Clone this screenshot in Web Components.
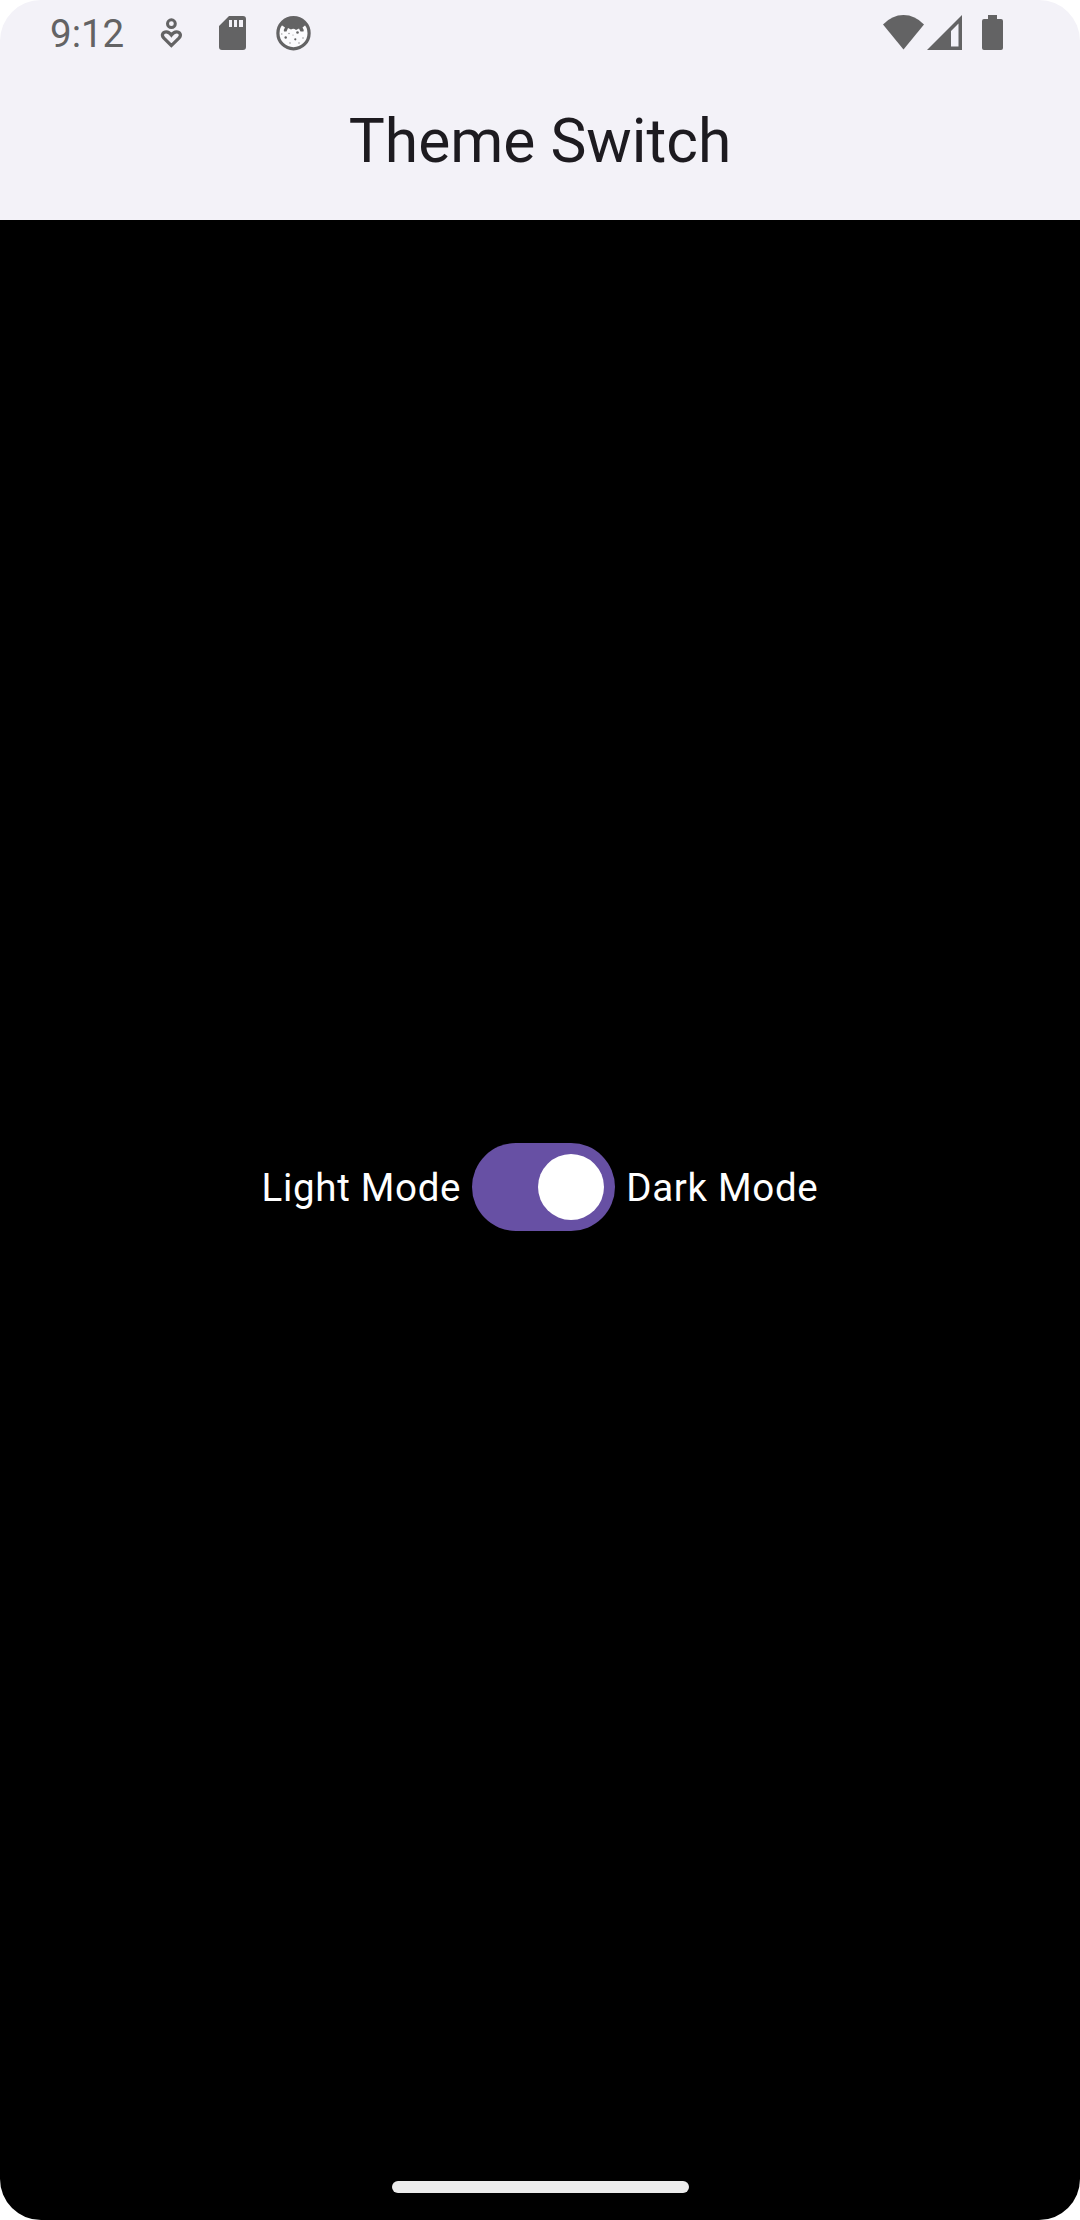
<!DOCTYPE html>
<html lang="en"><head><meta charset="utf-8"><title>Theme Switch</title>
<style>html,body{margin:0;background:#fff}</style></head>
<body>
<theme-screen>
<status-bar slot="top" time="9:12"></status-bar>
<app-bar slot="top">Theme Switch</app-bar>
<mode-label>Light Mode</mode-label><toggle-switch></toggle-switch><mode-label>Dark Mode</mode-label>
</theme-screen>
<script>
const define=(name,html)=>customElements.define(name,class extends HTMLElement{
 constructor(){super();this.attachShadow({mode:'open'}).innerHTML=html;}
 connectedCallback(){const t=this.shadowRoot.querySelector('.time');if(t)t.textContent=this.getAttribute('time');}
});
define('theme-screen',`<style>
:host{display:flex;flex-direction:column;width:1080px;height:2220px;box-sizing:border-box;font-family:Roboto,sans-serif}
header{height:220px;background:#f3f2f8;flex:none;border-radius:41px 41px 0 0}
main{flex:1;display:flex;align-items:center;justify-content:center;gap:11px;background:#000}
</style><header><slot name="top"></slot></header><main><slot></slot></main><home-indicator></home-indicator>`);
define('status-bar',`<style>
:host{display:flex;height:66px;box-sizing:border-box;padding:0 76px 0 50px;align-items:flex-start;color:#636364}
.time{font-size:38.5px;line-height:45px;width:105px;padding-top:11px}
svg{display:block;fill:currentColor;height:66px}
.right{margin-left:auto}
</style><span class="time"></span>
<svg width="160" viewBox="155 0 160 66">
<circle cx="171.4" cy="23.7" r="3.9" fill="none" stroke="currentColor" stroke-width="3"/>
<path d="M171.4 45.6L163.9 38.2C160.7 34.8 163.2 31.8 166.3 31.8C168.4 31.8 170 33 171.4 35C172.8 33 174.4 31.8 176.5 31.8C179.6 31.8 182.1 34.8 178.9 38.2Z" fill="none" stroke="currentColor" stroke-width="3.2"/>
<path fill-rule="evenodd" d="M229 16H243Q246 16 246 19V47Q246 50 243 50H222Q219 50 219 47V26ZM229 20V27H232V20ZM234 20V27H237V20ZM239 20V27H243V20Z"/>
<circle cx="293.5" cy="33.2" r="14.5" fill="#fbfbfd"/>
<circle cx="293.5" cy="33.2" r="15.6" fill="none" stroke="currentColor" stroke-width="3.2"/>
<path d="M281.5 25Q286 17 293.5 17Q301 17 305.5 25L302.5 27.5Q304 29.5 303.5 31.5L300.5 31.5L299 28.5L296 30Q293.5 28 291 29.5L288 28L286.5 31.5L284 31.5Q283.5 29.5 285 27.5Z"/>
<circle cx="285.7" cy="37.5" r="1.2"/><circle cx="297.5" cy="32.5" r="1.3"/><circle cx="295.3" cy="39.3" r="1.1"/><g opacity=".65"><circle cx="289" cy="33.5" r=".8"/><circle cx="303" cy="38" r=".8"/><circle cx="290" cy="43" r=".8"/><circle cx="299" cy="43" r=".8"/><circle cx="281.8" cy="34" r=".7"/><circle cx="293" cy="35" r=".6"/></g>
</svg>
<svg class="right" width="124" viewBox="880 0 124 66">
<path d="M903.5 49.5L883 24.5Q892 15 903.5 15Q915 15 924 24.5Z"/>
<path fill-rule="evenodd" d="M927 50L962 15V50ZM951 31V46.5H958.5V23.5Z"/>
<path d="M988 15H997V19H1001Q1003 19 1003 21V48Q1003 50 1001 50H984Q982 50 982 48V21Q982 19 984 19H988Z"/>
</svg>`);
define('app-bar',`<style>:host{display:flex;height:154px;box-sizing:border-box;align-items:center;justify-content:center;font-size:60.5px;line-height:77px;color:#1d1b20;padding-bottom:3px}</style><span><slot></slot></span>`);
define('mode-label',`<style>:host{display:block;color:#fff;font-size:38.5px;line-height:55px;letter-spacing:.6875px;white-space:nowrap}</style><slot></slot>`);
define('toggle-switch',`<style>:host{display:flex;box-sizing:border-box;width:143px;height:88px;border-radius:44px;background:#6750a4;padding:11px;justify-content:flex-end}i{width:66px;height:66px;border-radius:50%;background:#fff}</style><i></i>`);
define('home-indicator',`<style>:host{display:flex;height:66px;flex:none;justify-content:center;align-items:center;background:#000;border-radius:0 0 41px 41px}i{width:297px;height:11.5px;border-radius:6px;background:#ececec}</style><i></i>`);
</script>
</body></html>
